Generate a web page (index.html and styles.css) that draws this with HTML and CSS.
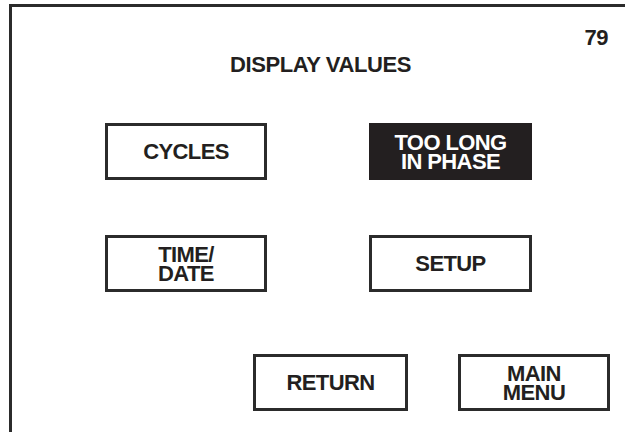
FILE: index.html
```html
<!DOCTYPE html>
<html>
	<head>
		<link rel="stylesheet" href="styles.css">
	</head>
	<body>
		<div class="screen">
			<div class="page-num">79</div>
			<div class="title">DISPLAY VALUES</div>
			<div class="menu">
				<div class="key">CYCLES</div>
				<div class="key key-on">TOO LONG<br>IN PHASE</div>
				<div class="key">TIME/<br>DATE</div>
				<div class="key">SETUP</div>
			</div>
			<div class="nav">
				<div class="key key-return">RETURN</div>
				<div class="key key-main">MAIN<br>MENU</div>
			</div>
		</div>
	</body>
</html>
```

FILE: styles.css
```css
*{
	margin: 0;
	padding: 0;
	box-sizing: border-box;
}
html, body{
	width: 625px;
	height: 432px;
	overflow: hidden;
	background-color: #fff;
}
body{
	font-family: "Liberation Sans", Arial, sans-serif;
	font-weight: bold;
	color: #231f20;
}
.screen{
	display: flex;
	flex-direction: column;
	margin: 4px 0 0 9px;
	width: 616px;
	height: 440px;
	border-top: 3px solid #2b2b2b;
	border-left: 3px solid #2b2b2b;
}
.page-num{
	margin-top: 20px;
	padding-right: 17px;
	font-size: 22px;
	line-height: 22px;
	letter-spacing: -0.5px;
	text-align: right;
}
.title{
	margin-top: 5px;
	padding-left: 4px;
	font-size: 22px;
	line-height: 22px;
	letter-spacing: -0.4px;
	text-align: center;
}
.menu{
	display: grid;
	grid-template-columns: 162px 163px;
	grid-auto-rows: 57px;
	column-gap: 102px;
	row-gap: 55px;
	margin: 47px 0 0 93px;
}
.nav{
	display: flex;
	gap: 50px;
	margin: 62px 0 0 241px;
}
.key{
	display: flex;
	justify-content: center;
	align-items: center;
	height: 57px;
	border: 3px solid #2b2b2b;
	font-size: 22px;
	line-height: 19px;
	letter-spacing: -0.6px;
	text-align: center;
}
.key-on{
	background-color: #231f20;
	border-color: #231f20;
	color: #fff;
}
.key-return{
	width: 155px;
}
.key-main{
	width: 152px;
}
```
